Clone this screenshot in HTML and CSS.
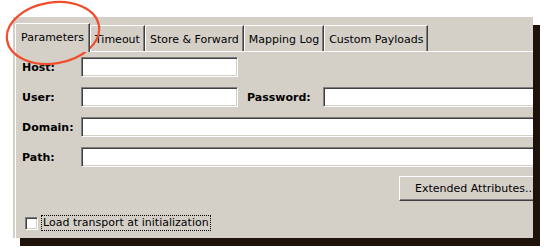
FILE: index.html
```html
<!DOCTYPE html>
<html lang="en">
  <head>
    <meta charset="UTF-8" />
    <title>Transport Parameters</title>
    <link rel="stylesheet" href="styles.css">
  </head>
  <body>
    <div class="stage">
      <div class="dialog">
        <div class="tabs">
          <div class="tab active">Parameters</div>
          <div class="tab">Timeout</div>
          <div class="tab">Store &amp; Forward</div>
          <div class="tab">Mapping Log</div>
          <div class="tab">Custom Payloads</div>
        </div>

        <div class="panel">
          <div class="row">
            <label class="label" for="host">Host:</label>
            <input class="field short" id="host" type="text" />
          </div>
          <div class="row">
            <label class="label" for="user">User:</label>
            <input class="field short" id="user" type="text" />
            <label class="label pass-label" for="password">Password:</label>
            <input class="field pass" id="password" type="password" />
          </div>
          <div class="row">
            <label class="label" for="domain">Domain:</label>
            <input class="field long" id="domain" type="text" />
          </div>
          <div class="row">
            <label class="label" for="path">Path:</label>
            <input class="field long" id="path" type="text" />
          </div>

          <div class="actions">
            <button type="button" class="btn">Extended Attributes...</button>
          </div>

          <div class="check-row">
            <span class="checkbox"></span>
            <span class="check-label">Load transport at initialization</span>
          </div>
        </div>
      </div>

      <!-- annotation drawn over the screenshot -->
      <svg class="callout" width="110" height="72" viewBox="0 0 110 72">
        <ellipse cx="53" cy="33" rx="46.5" ry="30.5" transform="rotate(-9 53 33)"
          fill="none" stroke="#ef4f2c" stroke-width="2.2" />
      </svg>
    </div>
  </body>
</html>
```

FILE: styles.css
```css
body {
  margin: 0;
  background-color: #fff;
  font-family: "DejaVu Sans", Verdana, sans-serif;
  font-size: 11px;
  color: #000;
}

.stage {
  position: relative;
  width: 544px;
  height: 249px;
  overflow: hidden;
}

.dialog {
  margin: 17px 0 0 13px;
  width: 520px;
  height: 221px;
  background-color: #d4d0c8;
  box-shadow: 7px 8px 0 #1d130b;
  overflow: hidden;
  padding-left: 2px;
  box-sizing: border-box;
}

/* tab strip */
.tabs {
  display: flex;
  align-items: flex-end;
  height: 34px;
}

.tab {
  height: 26px;
  line-height: 28px;
  padding: 0 4px 0 4px;
  border-top: 1px solid #fff;
  border-left: 1px solid #fff;
  border-right: 1px solid #404040;
  border-top-left-radius: 2px;
  box-shadow: inset -1px 0 0 #808080;
  box-sizing: border-box;
  white-space: nowrap;
}

.tab.active {
  height: 29px;
  line-height: 27px;
  margin-bottom: -1px;
  padding: 0 5px 0 5px;
  background-color: #d4d0c8;
  position: relative;
  z-index: 1;
}

/* tab page */
.panel {
  border-top: 1px solid #fff;
  border-left: 1px solid #fff;
  padding: 5px 0 0 6px;
  height: 200px;
}

.row {
  display: flex;
  align-items: center;
  height: 20px;
  margin-bottom: 10px;
}

.label {
  width: 59px;
  flex: none;
  font-weight: bold;
}

.pass-label {
  width: 76px;
  margin-left: 9px;
}

.field {
  flex: none;
  height: 20px;
  box-sizing: border-box;
  background-color: #fff;
  border-top: 1px solid #808080;
  border-left: 1px solid #808080;
  border-right: 1px solid #fff;
  border-bottom: 1px solid #fff;
  box-shadow: inset 1px 1px 0 #404040, inset -1px -1px 0 #d4d0c8;
  padding: 0 3px;
  font: inherit;
  outline: none;
}

.short {
  width: 157px;
}

.pass {
  width: 230px;
}

.long {
  width: 470px;
}

.actions {
  display: flex;
  justify-content: flex-end;
  margin-top: -1px;
  margin-right: -18px;
}

.btn {
  width: 152px;
  height: 25px;
  padding: 0 0 0 15px;
  text-align: left;
  font: inherit;
  color: #000;
  background-color: #d4d0c8;
  border-top: 1px solid #fff;
  border-left: 1px solid #fff;
  border-right: 1px solid #404040;
  border-bottom: 1px solid #404040;
  box-shadow: inset -1px -1px 0 #808080;
  white-space: nowrap;
}

.check-row {
  display: flex;
  align-items: center;
  margin-top: 14px;
  margin-left: 3px;
}

.checkbox {
  width: 13px;
  height: 13px;
  box-sizing: border-box;
  background-color: #fff;
  border-top: 1px solid #808080;
  border-left: 1px solid #808080;
  border-right: 1px solid #fff;
  border-bottom: 1px solid #fff;
  box-shadow: inset 1px 1px 0 #404040, inset -1px -1px 0 #d4d0c8;
}

.check-label {
  margin-left: 3px;
  padding: 0 1px;
  line-height: 14px;
  border: 1px dotted #000;
}

.callout {
  position: absolute;
  left: 0;
  top: 0;
}
```
